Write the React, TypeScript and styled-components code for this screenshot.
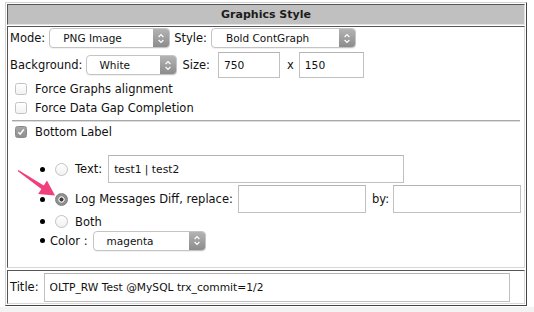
import React from "react";
import styled, { createGlobalStyle } from "styled-components";

const Global = createGlobalStyle`
  html, body { margin: 0; padding: 0; background: #f3f3f3; }
  body {
    font-family: "DejaVu Sans", "Liberation Sans", sans-serif;
    font-size: 11.5px;
    color: #111;
  }
`;

const Page = styled.div`
  box-sizing: border-box;
  width: 534px;
  height: 307px;
  background: #fff;
  padding: 2px 0 0 5px;
`;

const Frame = styled.div`
  box-sizing: border-box;
  width: 522px;
  height: 304px;
  border: 1px solid;
  border-color: #d2d2d2 #444 #444 #d2d2d2;
  padding: 1px;
  display: flex;
  flex-direction: column;
`;

const Header = styled.div`
  box-sizing: border-box;
  height: 21px;
  background: #c0c0c0;
  border: 1px solid;
  border-color: #555 #e2e2e2 #e2e2e2 #555;
  display: flex;
  align-items: center;
  justify-content: center;
  font-weight: bold;
  font-size: 11px;
  color: #1c1c1c;
`;

const Cell = styled.div<{ $h: number; $mt: number }>`
  box-sizing: border-box;
  position: relative;
  height: ${(p) => p.$h}px;
  margin-top: ${(p) => p.$mt}px;
  border: 1px solid;
  border-color: #555 #d8d8d8 #d8d8d8 #555;
  background: #fff;
  display: flex;
  flex-direction: column;
`;

const Row = styled.div<{ $h: number; $pl?: number; $mt?: number }>`
  display: flex;
  align-items: center;
  height: ${(p) => p.$h}px;
  padding-left: ${(p) => p.$pl ?? 0}px;
  margin-top: ${(p) => p.$mt ?? 0}px;
  white-space: nowrap;
`;

const Label = styled.span<{ $ml?: number }>`
  margin-left: ${(p) => p.$ml ?? 0}px;
`;

const SelectBox = styled.div<{ $w: number; $ml: number }>`
  box-sizing: border-box;
  width: ${(p) => p.$w}px;
  height: 20px;
  margin-left: ${(p) => p.$ml}px;
  border: 1px solid #c4c4c4;
  border-radius: 4px;
  background: #fff;
  display: flex;
  align-items: stretch;
  overflow: hidden;
  box-shadow: 0 1px 0 rgba(0, 0, 0, 0.05);
`;

const SelectText = styled.span<{ $pl: number }>`
  flex: 1;
  display: flex;
  align-items: center;
  padding-left: ${(p) => p.$pl}px;
  font-size: 10.5px;
  color: #111;
`;

const Stepper = styled.span`
  width: 16px;
  background: linear-gradient(#b3b3b3, #8c8c8c);
  display: flex;
  align-items: center;
  justify-content: center;
`;

const TextInput = styled.input<{ $w: number; $h: number; $ml: number }>`
  box-sizing: border-box;
  width: ${(p) => p.$w}px;
  height: ${(p) => p.$h}px;
  margin: 0 0 0 ${(p) => p.$ml}px;
  border: 1px solid #c0c0c0;
  border-top-color: #b4b4b4;
  padding: 0 0 0 5px;
  font-family: "DejaVu Sans", "Liberation Sans", sans-serif;
  font-size: 10.7px;
  color: #111;
  background: #fff;
  outline: none;
`;

const Checkbox = styled.span<{ $checked?: boolean; $ml: number }>`
  box-sizing: border-box;
  width: 12px;
  height: 12px;
  margin-left: ${(p) => p.$ml}px;
  border-radius: 2.5px;
  border: 1px solid ${(p) => (p.$checked ? "#8a8a8a" : "#c2c2c2")};
  background: ${(p) =>
    p.$checked ? "linear-gradient(#a6a6a6, #8e8e8e)" : "linear-gradient(#fff, #f2f2f2)"};
  display: flex;
  align-items: center;
  justify-content: center;
`;

const Radio = styled.span<{ $checked?: boolean }>`
  box-sizing: border-box;
  width: 13px;
  height: 13px;
  margin-left: 5px;
  border-radius: 50%;
  border: 1px solid ${(p) => (p.$checked ? "#7e7e7e" : "#c2c2c2")};
  background: ${(p) =>
    p.$checked
      ? "radial-gradient(circle, #3c3c3c 0 1.8px, #d8d8d8 2.2px 3px, #8f8f8f 3.4px)"
      : "linear-gradient(#fff, #f1f1f1)"};
`;

const Hr = styled.div`
  height: 0;
  margin: 3px 4px 0 4px;
  border-top: 1px solid #a8a8a8;
  border-bottom: 1px solid #dcdcdc;
`;

const List = styled.div`
  display: flex;
  flex-direction: column;
  margin-top: 13px;
`;

const Item = styled(Row)`
  &::before {
    content: "";
    width: 5px;
    height: 5px;
    border-radius: 50%;
    background: #000;
    margin: 0 5px 0 32px;
    flex: none;
  }
`;

const Arrow = styled.svg`
  position: absolute;
  left: 9px;
  top: 142px;
  width: 40px;
  height: 28px;
  pointer-events: none;
`;

const Chevrons = () => (
  <svg width="8" height="13" viewBox="0 0 8 13">
    <path d="M1.6 5 L4 2.6 L6.4 5" fill="none" stroke="#fff" strokeWidth="1.2" />
    <path d="M1.6 8 L4 10.4 L6.4 8" fill="none" stroke="#fff" strokeWidth="1.2" />
  </svg>
);

const Select = ({ value, w, ml, pl }: { value: string; w: number; ml: number; pl: number }) => (
  <SelectBox $w={w} $ml={ml}>
    <SelectText $pl={pl}>{value}</SelectText>
    <Stepper>
      <Chevrons />
    </Stepper>
  </SelectBox>
);

const Check = () => (
  <svg width="8" height="8" viewBox="0 0 8 8">
    <path d="M1.3 4.2 L3.2 6.2 L6.8 1.4" fill="none" stroke="#fff" strokeWidth="1.5" />
  </svg>
);

export default function App() {
  return (
    <>
      <Global />
      <Page>
        <Frame>
          <Header>Graphics Style</Header>
          <Cell $h={242} $mt={1}>
            <Row $h={22} $pl={2}>
              <Label>Mode:</Label>
              <Select value="PNG Image" w={121} ml={4} pl={13} />
              <Label $ml={4}>Style:</Label>
              <Select value="Bold ContGraph" w={145} ml={4} pl={14} />
            </Row>
            <Row $h={30} $pl={2} $mt={1}>
              <Label>Background:</Label>
              <Select value="White" w={91} ml={4} pl={12} />
              <Label $ml={5}>Size:</Label>
              <TextInput $w={62} $h={26} $ml={8} defaultValue="750" />
              <Label $ml={7}>x</Label>
              <TextInput $w={65} $h={26} $ml={5} defaultValue="150" />
            </Row>
            <Row $h={18}>
              <Checkbox $ml={7} />
              <Label $ml={8}>Force Graphs alignment</Label>
            </Row>
            <Row $h={18} $mt={1}>
              <Checkbox $ml={7} />
              <Label $ml={8}>Force Data Gap Completion</Label>
            </Row>
            <Hr />
            <Row $h={18} $mt={1}>
              <Checkbox $ml={7} $checked>
                <Check />
              </Checkbox>
              <Label $ml={8}>Bottom Label</Label>
            </Row>
            <List>
              <Item $h={30}>
                <Radio />
                <Label $ml={7}>Text:</Label>
                <TextInput $w={296} $h={28} $ml={6} defaultValue="test1 | test2" />
              </Item>
              <Item $h={30}>
                <Radio $checked />
                <Label $ml={7}>Log Messages Diff, replace:</Label>
                <TextInput $w={128} $h={28} $ml={5} defaultValue="" />
                <Label $ml={6}>by:</Label>
                <TextInput $w={128} $h={28} $ml={4} defaultValue="" />
              </Item>
              <Item $h={15}>
                <Radio />
                <Label $ml={7}>Both</Label>
              </Item>
              <Item $h={23}>
                <Label>Color :</Label>
                <Select value="magenta" w={113} ml={5} pl={13} />
              </Item>
            </List>
            <Arrow viewBox="17 169 40 28">
              <polygon
                points="18.4,169.9 43.76,185.42 46.95,180.6 55,195.5 38.15,193.9 41.34,189.08 17.6,171.1"
                fill="#ef3f7c"
              />
            </Arrow>
          </Cell>
          <Cell $h={34} $mt={2}>
            <Row $h={32} $pl={2}>
              <Label>Title:</Label>
              <TextInput
                $w={466}
                $h={29}
                $ml={5}
                defaultValue="OLTP_RW Test @MySQL trx_commit=1/2"
              />
            </Row>
          </Cell>
        </Frame>
      </Page>
    </>
  );
}
